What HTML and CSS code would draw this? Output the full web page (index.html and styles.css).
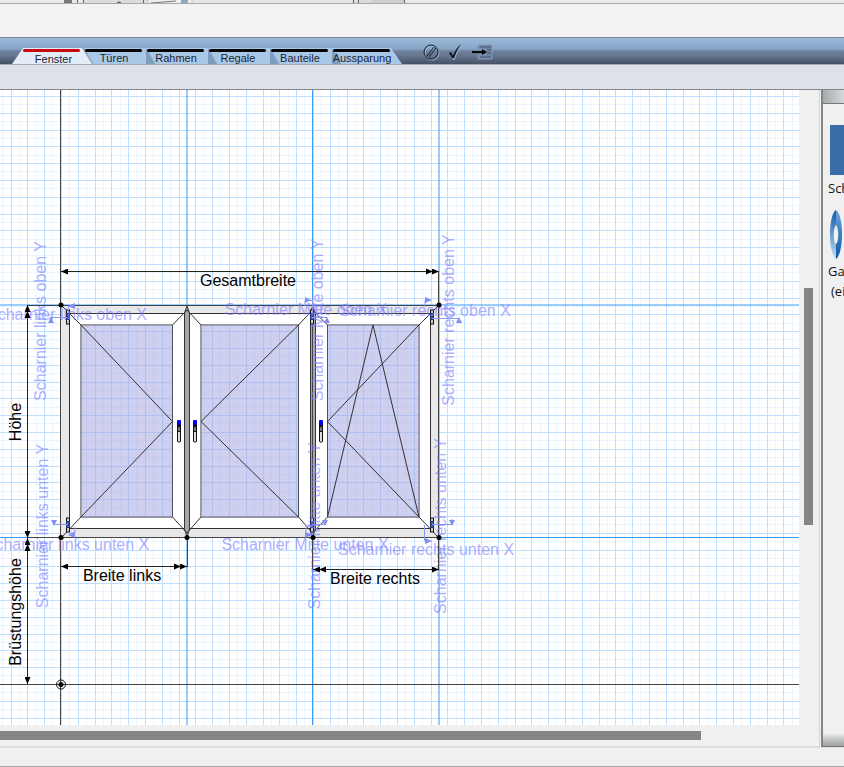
FILE: index.html
```html
<!DOCTYPE html>
<html lang="de">
<head>
  <meta charset="UTF-8">
  <meta name="viewport" content="width=device-width, initial-scale=1.0">
  <title>Fenster</title>
  <link rel="stylesheet" href="styles.css">
</head>
<body>
  <svg class="remnant" aria-hidden="true">
    <rect x="64" width="8" height="3" fill="#777"/>
    <rect x="83" width="321" height="3" fill="#d9dbdd"/>
    <path d="M77.500 0V3M83.500 0V3M143.500 0V3M353.500 0V3M358.500 0V3M404.500 0V3" stroke="#666"/>
    <path d="M117 3q2-2 4 0" stroke="#335" fill="none"/>
    <rect x="149" width="42" height="3" fill="#eee"/>
    <path d="M151 3L176 1M330 3L342 0" stroke="#777"/>
    <rect x="181" width="7" height="3" fill="#8aa9c8"/>
    <rect x="194" width="158" height="3" fill="#e4e5e6"/>
    <rect x="372" width="32" height="3" fill="#cdd0d1"/>
  </svg>
  <div class="spacer"></div>

  <nav class="toolbar">
    <div class="tabs">
      <button class="tab active"><span>Fenster</span></button>
      <button class="tab"><span>Türen</span></button>
      <button class="tab"><span>Rahmen</span></button>
      <button class="tab"><span>Regale</span></button>
      <button class="tab"><span>Bauteile</span></button>
      <button class="tab last"><span>Aussparung</span></button>
    </div>
    <div class="tools">
      <button class="tool" aria-label="Abbrechen">
        <svg width="18" height="18" viewBox="0 0 18 18">
          <circle cx="10" cy="10" r="7" fill="none" stroke="#9fb2cb"/>
          <g fill="none" stroke="#141d2b"><circle cx="9" cy="9" r="7"/><path d="M5 13L12 4M7 14L14 5"/></g>
        </svg>
      </button>
      <button class="tool" aria-label="Übernehmen">
        <svg width="18" height="18" viewBox="0 0 18 18">
          <path d="M3 12L7 17Q9 9 15 3" fill="none" stroke="#9fb2cb"/>
          <path d="M2 10L4 9L6 13Q9 5 14 1Q9 8 7 15L5 15Z" fill="#0c121c"/>
        </svg>
      </button>
      <button class="tool" aria-label="Verlassen">
        <svg width="22" height="18" viewBox="0 0 22 18">
          <path d="M6 2H20V16H6V12H14V6H6Z" fill="#6d82a2" stroke="#8499b6"/>
          <path d="M8 4H19M15 7H19M15 10H19M8 14H19" stroke="#4d5f7b"/>
          <path d="M0 9H11" stroke="#05080d" stroke-width="2"/><path d="M10 6L15 9L10 12Z" fill="#05080d"/>
        </svg>
      </button>
    </div>
  </nav>
  <div class="options"></div>

  <main class="editor">
    <section class="workspace">
      <svg class="plan">
        <defs>
          <!-- ten grid cells per tile, every second line is a main line -->
          <pattern id="grid" x="61" y="684" width="84" height="84" patternUnits="userSpaceOnUse">
            <path d="M8.500 0V84M25.500 0V84M42.500 0V84M59.500 0V84M75.500 0V84M0 8.500H84M0 25.500H84M0 42.500H84M0 59.500H84M0 75.500H84" stroke="#ebf5ff"/>
            <path d="M.5 0V84M17.500 0V84M34.500 0V84M50.500 0V84M67.500 0V84M0 .5H84M0 17.500H84M0 34.500H84M0 50.500H84M0 67.500H84" stroke="#bfdfff"/>
          </pattern>
          <marker id="arrow" viewBox="0 0 7 6" refX="7" refY="3" markerWidth="7" markerHeight="6" markerUnits="userSpaceOnUse" orient="auto-start-reverse">
            <path d="M0 0L7 3L0 6Z"/>
          </marker>
          <g id="handle">
            <path d="M-1.500 5V18.500Q0 20 1.500 18.500V5" fill="#ddd" stroke="#111"/>
            <rect x="-2" y="1" width="4" height="8" fill="#111"/>
            <path d="M-1 5H1M-1 7H1" stroke="#ddd"/>
            <rect x="-2" y="-3" width="4" height="5" rx="1" fill="#00f"/>
          </g>
          <g id="hinge">
            <rect x="-1.500" y="-7" width="3" height="14" fill="#ccc" stroke="#111"/>
            <rect x="-2" y="-4" width="4" height="7" fill="#1c3170"/>
            <path d="M-1 -2H1M-1 1H1" stroke="#6f91e8"/>
          </g>
        </defs>
        <g transform="translate(0 -90)">
          <rect y="90" width="100%" height="100%" fill="url(#grid)"/>
          <path class="guide" d="M187 90V1000M312.500 90V1000M439 90V1000M0 305H3000M0 537.500H3000"/>
          <path class="line" d="M60.500 90V1000M0 684.500H3000"/>

          <!-- frame and sashes -->
          <path class="frame" fill-rule="evenodd" d="M61 305H439V538H61ZM69 313V529H431V313Z"/>
          <path class="line" d="M61 305.500H438.500V537.500H61"/>
          <path class="sash" fill-rule="evenodd" d="M69.500 313.500H184.500V528.500H69.500ZM81 325V517H172.500V325ZM189.500 313.500H310.500V528.500H189.500ZM201 325V517H298.500V325ZM315.500 313.500H430.500V528.500H315.500ZM327.500 325V517H419V325Z"/>
          <path class="glass" d="M81 325H172.500V517H81ZM201 325H298.500V517H201ZM327.500 325H419V517H327.500Z"/>
          <path class="mullion" d="M184.500 313L187 306L189.500 313V529L187 537L184.500 529ZM310.500 313L312.500 306L315.500 313V529L312.500 537L310.500 529Z"/>
          <path class="line" d="M312.500 313V529"/>
          <path class="thin" d="M61 305L81 325L172.500 421.500L81 517L61 538M439 305L419 325L327.500 421.500L419 517L439 538M172.500 325L187 310M172.500 517L187 533M201 325L187 310M201 517L187 533M298.500 325L312.500 310M298.500 517L312.500 533M327.500 325L312.500 310M327.500 517L312.500 533M298.500 325L201 421.500L298.500 517M327.500 517L373 325L419 517"/>
          <use href="#handle" x="179" y="423"/>
          <use href="#handle" x="195" y="423"/>
          <use href="#handle" x="321" y="423"/>
          <use href="#hinge" x="68" y="317"/>
          <use href="#hinge" x="68" y="525"/>
          <use href="#hinge" x="312" y="317"/>
          <use href="#hinge" x="312" y="525"/>
          <use href="#hinge" x="432" y="317"/>
          <use href="#hinge" x="432" y="525"/>

          <!-- hinge dimensions -->
          <g class="hinge-line">
            <path d="M50 320V317.500H67M68.500 310V306H74M312.500 310V300.500H305V306M312 317.500H327V322M425 307V300.500H431M432 318.500H459V323M54 520V524.500H68M68 533H75V527M306 535V526H312M312 524.500H325V520M424.500 525V540.500H430M432 524.500H452V519"/>
            <path class="hinge-tip" d="M48 323L51 317L54 323ZM68 306L75 303V309ZM305 297L311 300L305 303ZM324 323L327 317L330 323ZM425 297L432 300L425 303ZM456 323L459 317L462 323ZM51 520H57L54 526ZM68 535L75 532V538ZM305 532L312 535L305 538ZM322 520H328L325 526ZM425 538L432 541L425 544ZM449 520H455L452 526Z"/>
          </g>
          <g class="hinge-text">
            <text x="67" y="320">Scharnier links oben X</text>
            <text x="306" y="315">Scharnier Mitte oben X</text>
            <text x="425" y="316">Scharnier rechts oben X</text>
            <text x="67" y="550">Scharnier links unten X</text>
            <text x="305" y="550">Scharnier Mitte unten X</text>
            <text x="426" y="555">Scharnier rechts unten X</text>
            <text transform="translate(46 321) rotate(-90)">Scharnier links oben Y</text>
            <text transform="translate(323 320) rotate(-90)">Scharnier Mitte oben Y</text>
            <text transform="translate(454 320) rotate(-90)">Scharnier rechts oben Y</text>
            <text transform="translate(48 526) rotate(-90)">Scharnier links unten Y</text>
            <text transform="translate(320 526) rotate(-90)">Scharnier Mitte unten Y</text>
            <text transform="translate(446 526) rotate(-90)">Scharnier rechts unten Y</text>
          </g>

          <!-- main dimensions -->
          <path class="line" d="M438.500 271V305M187.500 538V567M312.500 538V569M438.500 538V569M27 305.500H61M27 537.500H61"/>
          <g class="dim">
            <path d="M61 271.500H439"/>
            <path d="M61 566.500H187"/>
            <path d="M313 569.500H439"/>
            <path d="M27.500 305V538"/>
            <path d="M27.500 538V684"/>
          </g>
          <path d="M426 268.500L433 271.500L426 274.500ZM174 563.500L181 566.500L174 569.500ZM326 566.500L319 569.500L326 572.500ZM24.500 318L27.500 311L30.500 318ZM24.500 551L27.500 544L30.500 551Z"/>
          <g class="dim-text">
            <text x="248" y="286">Gesamtbreite</text>
            <text x="122" y="581">Breite links</text>
            <text x="375" y="584">Breite rechts</text>
            <text transform="translate(21 422) rotate(-90)">Höhe</text>
            <text transform="translate(21 612) rotate(-90)">Brüstungshöhe</text>
          </g>
          <g>
            <circle cx="61" cy="305" r="2.500"/><circle cx="439" cy="305" r="2.500"/>
            <circle cx="61" cy="537.500" r="2.500"/><circle cx="187" cy="537.500" r="2.500"/>
            <circle cx="313" cy="537.500" r="2.500"/><circle cx="439" cy="537.500" r="2.500"/>
            <circle cx="61" cy="684.500" r="2.500"/>
            <circle cx="61" cy="684.500" r="4.500" fill="none" stroke="#111"/>
          </g>
        </g>
      </svg>
      <div class="scroll-y"><div class="thumb"></div></div>
      <div class="scroll-x"><div class="thumb"></div></div>
    </section>

    <aside class="catalog">
      <div class="catalog-head"></div>
      <ul class="items">
        <li>
          <div class="swatch"></div>
          <span>Sch</span>
        </li>
        <li>
          <svg width="24" height="52" viewBox="0 0 24 52">
            <defs>
              <linearGradient id="ring" x1="0" y1="0" x2="0" y2="1">
                <stop offset="0" stop-color="#0d5cab"/><stop offset="1" stop-color="#c3dbf3"/>
              </linearGradient>
              <linearGradient id="side" x1="0" y1="0" x2="0" y2="1">
                <stop offset="0" stop-color="#6ea5d8"/><stop offset="1" stop-color="#0c57a5"/>
              </linearGradient>
            </defs>
            <path d="M8 1C0 6 0 44 8 50V35C5 33 5 19 8 16Z" fill="url(#ring)"/>
            <path d="M8 1C16 6 16 44 8 50V35C11 33 11 19 8 16Z" fill="url(#side)"/>
          </svg>
          <span>Ga</span>
          <span class="sub">(ei</span>
        </li>
      </ul>
      <div class="catalog-foot"></div>
    </aside>
  </main>
  <footer class="status"></footer>
</body>
</html>
```

FILE: styles.css
```css
* {
  box-sizing: border-box;
}

body {
  margin: 0;
  height: 100vh;
  display: flex;
  flex-direction: column;
  overflow: hidden;
  background: #f0f0f0;
  font-family: "Liberation Sans", Arial, sans-serif;
  color: #111;
}

.remnant {
  display: block;
  width: 100%;
  height: 4px;
  background: #e8e8e8;
  border-bottom: 1px solid #a8a8a8;
}

.spacer {
  height: 34px;
  background: #f2f2f2;
  border-bottom: 1px solid #808890;
}

.toolbar {
  display: flex;
  align-items: flex-end;
  gap: 20px;
  height: 26px;
  padding-left: 12px;
  background: linear-gradient(#9bb9d8 0, #86a5c7 11px, #71839c 13px, #64758f 18px, #465065 26px);
}

.tabs {
  display: flex;
}

.tab {
  width: 62px;
  height: 16px;
  padding: 0;
  border: none;
  background: linear-gradient(60deg, #7f9dbd 0, #7f9dbd 7px, #a9c8e8 9px);
  font: 11px/17px "Liberation Sans", Arial, sans-serif;
  color: #1b2530;
  white-space: nowrap;
}

.tab::before {
  content: "";
  display: block;
  height: 3px;
  margin: 1px 4px 0 1px;
  border-radius: 2px;
  background: #050505;
}

.tab span {
  display: block;
  height: 12px;
  padding-right: 2px;
  line-height: 12px;
}

.tab.active {
  width: 80px;
  margin-right: -8px;
  background: #e4ecf8;
  clip-path: polygon(11px 0, 70px 0, 100% 100%, 0 100%);
  z-index: 1;
}

.tab.active::before {
  margin: 1px 12px 0 11px;
  background: #c80b12;
}

.tab.active span {
  padding: 0 0 0 3px;
  line-height: 15px;
}

.tab.last {
  width: 70px;
  clip-path: polygon(0 0, 59px 0, 100% 100%, 0 100%);
}

.tab.last::before {
  margin-right: 12px;
}

.tab.last span {
  padding-right: 10px;
}

.tools {
  display: flex;
  gap: 7px;
  padding-bottom: 3px;
}

.tool {
  padding: 0;
  border: none;
  background: none;
  line-height: 0;
}

.options {
  height: 26px;
  background: #dfe1ea;
  border-top: 1px solid #a7aab0;
  border-bottom: 1px solid #888a90;
}

.editor {
  flex: 1;
  display: flex;
  min-height: 0;
}

.workspace {
  flex: 1;
  display: grid;
  grid-template-columns: 1fr 20px;
  grid-template-rows: 1fr 21px;
  min-width: 0;
  border-right: 1px solid #d8d8d8;
  border-bottom: 1px solid #dcdcdc;
}

.plan {
  display: block;
  width: 100%;
  height: 100%;
  background: #fff;
}

.scroll-y {
  padding: 198px 6px 0 5px;
}

.scroll-y .thumb {
  height: 237px;
  background: #858585;
}

.scroll-x {
  padding: 6px 98px 0 0;
}

.scroll-x .thumb {
  height: 9px;
  background: #858585;
}

.guide {
  stroke: #3b9bf8;
  fill: none;
}

.line {
  stroke: #444;
  fill: none;
}

.frame {
  fill: #e8e8e8;
}

.sash {
  fill: #fff;
  stroke: #333;
}

.glass {
  fill: #a0a0e0;
  fill-opacity: .5;
}

.mullion {
  fill: #a8a8a8;
  stroke: #333;
}

.thin {
  fill: none;
  stroke: #333;
}

.dim path {
  stroke: #222;
  marker-start: url(#arrow);
  marker-end: url(#arrow);
}

.hinge-line {
  fill: none;
  stroke: #8e9af0;
}

.hinge-line .hinge-tip {
  fill: #8390f0;
  stroke: none;
}

.hinge-text {
  font-size: 16px;
  text-anchor: middle;
  fill: #8080ff;
  fill-opacity: .65;
}

.dim-text {
  font-size: 16px;
  text-anchor: middle;
  fill: #000;
}

.catalog {
  display: flex;
  flex-direction: column;
  width: 23px;
  margin-left: 1px;
  overflow: hidden;
  border-left: 2px solid #858585;
  border-bottom: 1px solid #777;
}

.catalog-head {
  height: 14px;
  background: linear-gradient(90deg, #a4aaad, #d4d8da);
  border-bottom: 1px solid #777;
}

.items {
  flex: 1;
  margin: 0;
  padding: 21px 0 0 5px;
  list-style: none;
  font: 13px/20px "Open Sans", "Noto Sans", sans-serif;
}

.items li {
  width: 80px;
  margin-bottom: 11px;
}

.items svg,
.items span {
  display: block;
}

.items .sub {
  padding-left: 3px;
}

.swatch {
  height: 50px;
  margin: 0 0 3px 2px;
  background: #3a6ea8;
}

.catalog-foot {
  height: 14px;
  background: linear-gradient(#f4f4f4, #9b9f9f);
}

.status {
  height: 20px;
  border-top: 1px solid #e0e0e0;
  border-bottom: 1px solid #aaa;
}
```
